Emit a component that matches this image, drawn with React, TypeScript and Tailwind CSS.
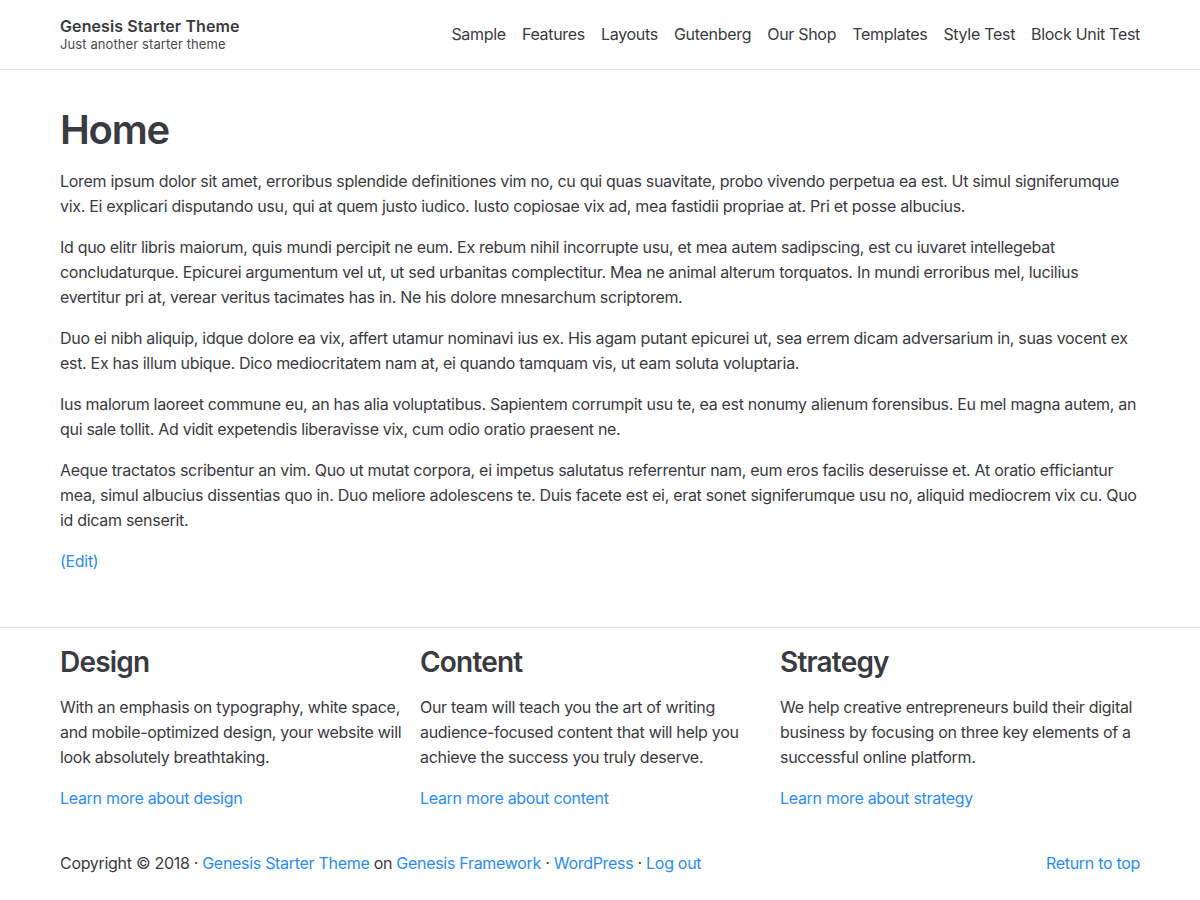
import React from "react";

const font = { fontFamily: "Inter, 'Noto Sans', sans-serif" };

const nav = ["Sample", "Features", "Layouts", "Gutenberg", "Our Shop", "Templates", "Style Test", "Block Unit Test"];

const paras = [
  "Lorem ipsum dolor sit amet, erroribus splendide definitiones vim no, cu qui quas suavitate, probo vivendo perpetua ea est. Ut simul signiferumque vix. Ei explicari disputando usu, qui at quem justo iudico. Iusto copiosae vix ad, mea fastidii propriae at. Pri et posse albucius.",
  "Id quo elitr libris maiorum, quis mundi percipit ne eum. Ex rebum nihil incorrupte usu, et mea autem sadipscing, est cu iuvaret intellegebat concludaturque. Epicurei argumentum vel ut, ut sed urbanitas complectitur. Mea ne animal alterum torquatos. In mundi erroribus mel, lucilius evertitur pri at, verear veritus tacimates has in. Ne his dolore mnesarchum scriptorem.",
  "Duo ei nibh aliquip, idque dolore ea vix, affert utamur nominavi ius ex. His agam putant epicurei ut, sea errem dicam adversarium in, suas vocent ex est. Ex has illum ubique. Dico mediocritatem nam at, ei quando tamquam vis, ut eam soluta voluptaria.",
  "Ius malorum laoreet commune eu, an has alia voluptatibus. Sapientem corrumpit usu te, ea est nonumy alienum forensibus. Eu mel magna autem, an qui sale tollit. Ad vidit expetendis liberavisse vix, cum odio oratio praesent ne.",
  "Aeque tractatos scribentur an vim. Quo ut mutat corpora, ei impetus salutatus referrentur nam, eum eros facilis deseruisse et. At oratio efficiantur mea, simul albucius dissentias quo in. Duo meliore adolescens te. Duis facete est ei, erat sonet signiferumque usu no, aliquid mediocrem vix cu. Quo id dicam senserit.",
];

const widgets = [
  { t: "Design", d: "With an emphasis on typography, white space, and mobile-optimized design, your website will look absolutely breathtaking.", l: "Learn more about design" },
  { t: "Content", d: "Our team will teach you the art of writing audience-focused content that will help you achieve the success you truly deserve.", l: "Learn more about content" },
  { t: "Strategy", d: "We help creative entrepreneurs build their digital business by focusing on three key elements of a successful online platform.", l: "Learn more about strategy" },
];

const link = "text-[#2a8cf5]";

export default function App() {
  return (
    <div className="bg-white text-[#3a3a41] text-[16px] leading-[25px] tracking-[-0.3px] min-h-[900px]" style={font}>
      <header className="border-b border-[#e0e0e3]">
        <div className="mx-[60px] h-[69px] flex items-center justify-between">
          <div className="flex flex-col">
            <div className="text-[16px] leading-[19px] font-semibold tracking-[0.1px]">Genesis Starter Theme</div>
            <div className="text-[13px] leading-[16px] tracking-[0.1px] text-[#48484f]">Just another starter theme</div>
          </div>
          <nav className="flex gap-[16px] text-[16px]">
            {nav.map((n) => (
              <span key={n}>{n}</span>
            ))}
          </nav>
        </div>
      </header>
      <main className="mx-[60px] pt-[36px] pb-[53px]">
        <h1 className="text-[40px] leading-[48px] font-semibold mb-[15px] tracking-[-1.2px]">Home</h1>
        {paras.map((p, i) => (
          <p key={i} className="mb-[16px]">{p}</p>
        ))}
        <p className={link}>(Edit)</p>
      </main>
      <section className="border-t border-[#e0e0e3]">
        <div className="mx-[60px] grid grid-cols-3 pt-[17px]">
          {widgets.map((w) => (
            <div key={w.t}>
              <h3 className="text-[28px] leading-[34px] font-semibold mb-[16px] tracking-[-0.8px]">{w.t}</h3>
              <p className="mb-[16px]">{w.d}</p>
              <p className={link}>{w.l}</p>
            </div>
          ))}
        </div>
      </section>
      <footer className="mx-[60px] mt-[40px] flex justify-between pb-[24px]">
        <p>
          Copyright © 2018 · <span className={link}>Genesis Starter Theme</span> on{" "}
          <span className={link}>Genesis Framework</span> · <span className={link}>WordPress</span> ·{" "}
          <span className={link}>Log out</span>
        </p>
        <p className={link}>Return to top</p>
      </footer>
    </div>
  );
}
